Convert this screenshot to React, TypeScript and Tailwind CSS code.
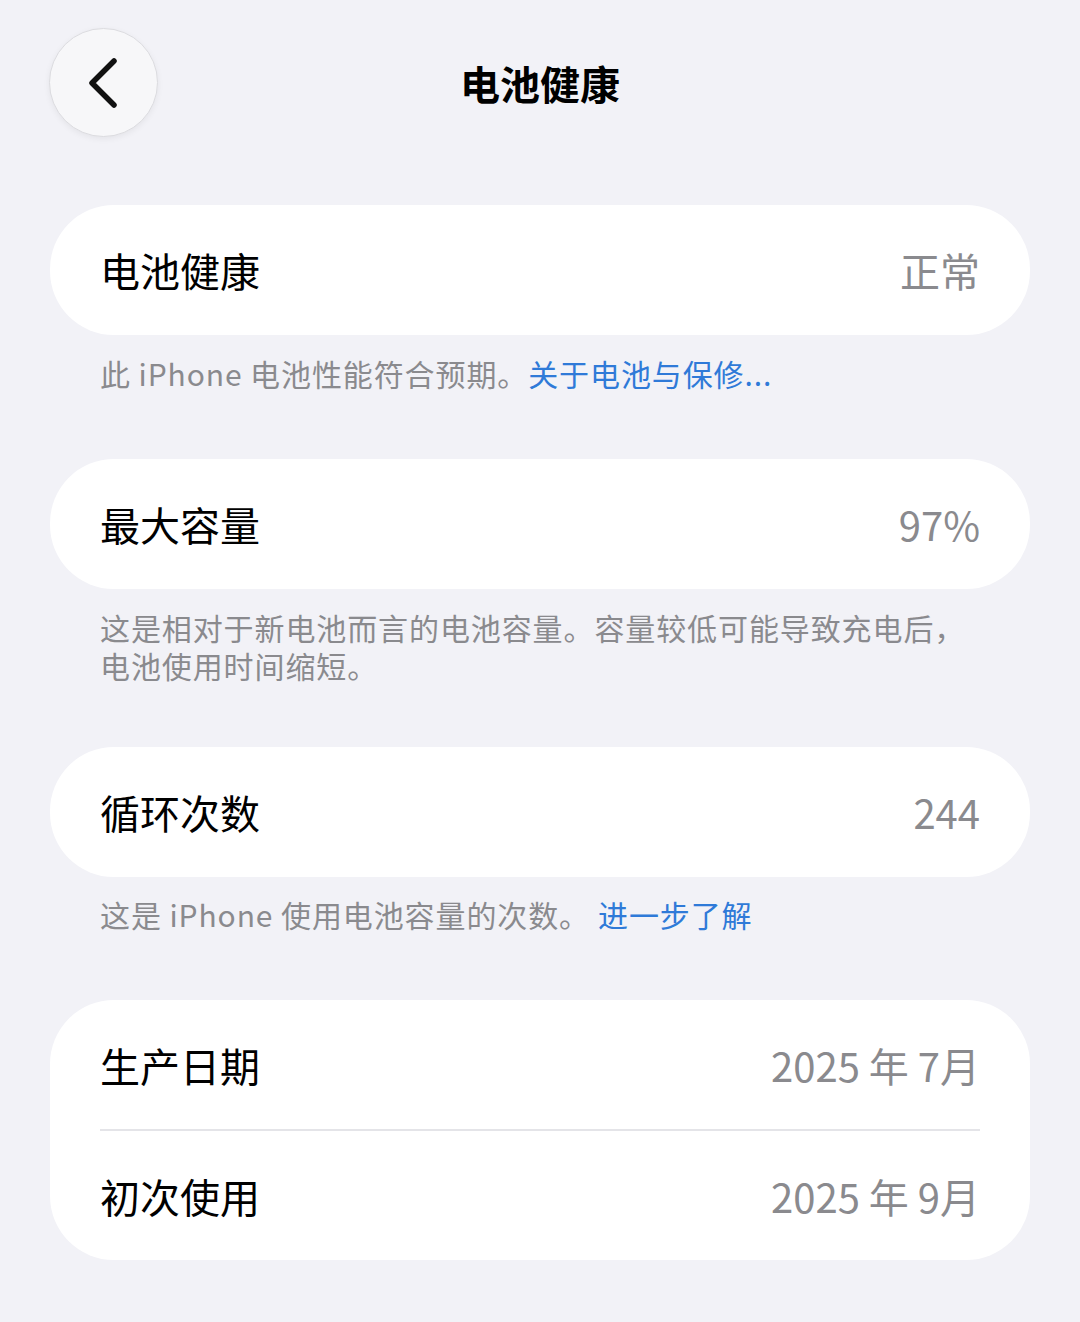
import React from "react";

const font = { fontFamily: '"Noto Sans CJK SC", "Noto Sans", sans-serif' };

function Row({ label, value, h = "h-[130px]" }: { label: string; value: string; h?: string }) {
  return (
    <div className={`flex ${h} items-center justify-between px-[50px]`}>
      <span className="text-[40px] text-black">{label}</span>
      <span className="text-[40px] text-[#8a8a8e]">{value}</span>
    </div>
  );
}

export default function App() {
  return (
    <div className="min-h-[1322px] w-[1080px] bg-[#f2f2f7]" style={font}>
      {/* Header */}
      <div className="relative flex h-[170px] items-start justify-center">
        <button className="absolute left-[49px] top-[28px] flex h-[109px] w-[109px] items-center justify-center rounded-full border border-[#dcdce0] bg-[#f7f7f9] shadow-[0_2px_6px_rgba(0,0,0,0.06)]">
          <svg width="40" height="52" viewBox="0 0 40 52" fill="none">
            <path
              d="M30 4 L8 26 L30 48"
              stroke="#111"
              strokeWidth="5.5"
              strokeLinecap="round"
              strokeLinejoin="round"
            />
          </svg>
        </button>
        <h1 className="mt-[55px] text-[40px] font-bold leading-[56px] text-black">
          电池健康
        </h1>
      </div>

      <div className="px-[50px] pt-[35px]">
        {/* Battery health */}
        <div className="rounded-[64px] bg-white">
          <Row label="电池健康" value="正常" />
        </div>
        <p className="px-[50px] pt-[19px] text-[30px] leading-[38px] tracking-[0.9px] text-[#8a8a8e]">
          此 iPhone 电池性能符合预期。
          <span className="text-[#2f7ad8]">关于电池与保修...</span>
        </p>

        {/* Max capacity */}
        <div className="mt-[67px] rounded-[64px] bg-white">
          <Row label="最大容量" value="97%" />
        </div>
        <div className="flex flex-col px-[50px] pt-[19px] text-[30px] leading-[38px] tracking-[0.9px] text-[#8a8a8e]">
          <span>这是相对于新电池而言的电池容量。容量较低可能导致充电后，</span>
          <span>电池使用时间缩短。</span>
        </div>

        {/* Cycle count */}
        <div className="mt-[63px] rounded-[64px] bg-white">
          <Row label="循环次数" value="244" />
        </div>
        <p className="px-[50px] pt-[18px] text-[30px] leading-[38px] tracking-[0.9px] text-[#8a8a8e]">
          这是 iPhone 使用电池容量的次数。
          <span className="ml-[8px] text-[#2f7ad8]">进一步了解</span>
        </p>

        {/* Dates */}
        <div className="mt-[67px] rounded-[64px] bg-white">
          <Row label="生产日期" value="2025 年 7月" h="h-[129px]" />
          <div className="mx-[50px] h-[2px] bg-[#e4e4e8]" />
          <Row label="初次使用" value="2025 年 9月" h="h-[129px]" />
        </div>
      </div>
    </div>
  );
}
